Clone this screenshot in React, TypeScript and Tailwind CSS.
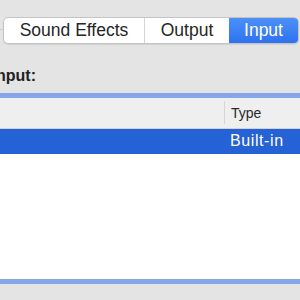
export default function App() {
  return (
    <div className="w-[300px] h-[300px] overflow-hidden bg-[#e4e4e4] font-['Liberation_Sans',Arial,sans-serif]">
      {/* tab bar */}
      <div className="flex items-start pt-[17px]">
        <div className="w-[3px] mt-[12px] h-px bg-[#cdcdcd]" />
        <div className="flex h-[27px] rounded-[5px] border border-[#c4c4c4] bg-white overflow-hidden shadow-[0_1px_1px_rgba(0,0,0,0.08)]">
          <div className="w-[141px] text-center text-[17.5px] leading-[25px] text-[#262626] border-r border-[#d4d4d4]">
            Sound Effects
          </div>
          <div className="w-[84px] text-center text-[17.5px] leading-[25px] text-[#262626]">
            Output
          </div>
          <div className="w-[69px] text-center text-[17.5px] leading-[25px] text-white bg-gradient-to-b from-[#4c90fa] to-[#2e72ef]">
            Input
          </div>
        </div>
      </div>

      {/* label */}
      <div className="mt-[22px] w-[36px] flex justify-end whitespace-nowrap">
        <span className="text-[16px] leading-[20px] font-bold text-[#222]">
          Select a device for sound input:
        </span>
      </div>

      {/* device table */}
      <div className="mt-[7px] border-y-[5px] border-[#85a6e8] bg-white">
        <div className="flex h-[31px] bg-[#efefef] border-b border-[#d2d2d2]">
          <div className="w-[224px]" />
          <div className="w-px h-[23px] mt-[3px] bg-[#d5d5d5]" />
          <div className="pl-[6px] text-[14px] leading-[30px] text-[#2a2a2a]">Type</div>
        </div>
        <div className="flex h-[25px] bg-[#2462d5]">
          <div className="w-[230px]" />
          <div className="text-[16px] leading-[23px] tracking-[0.6px] text-white">Built-in</div>
        </div>
        <div className="h-[125px] bg-white" />
      </div>
    </div>
  );
}
